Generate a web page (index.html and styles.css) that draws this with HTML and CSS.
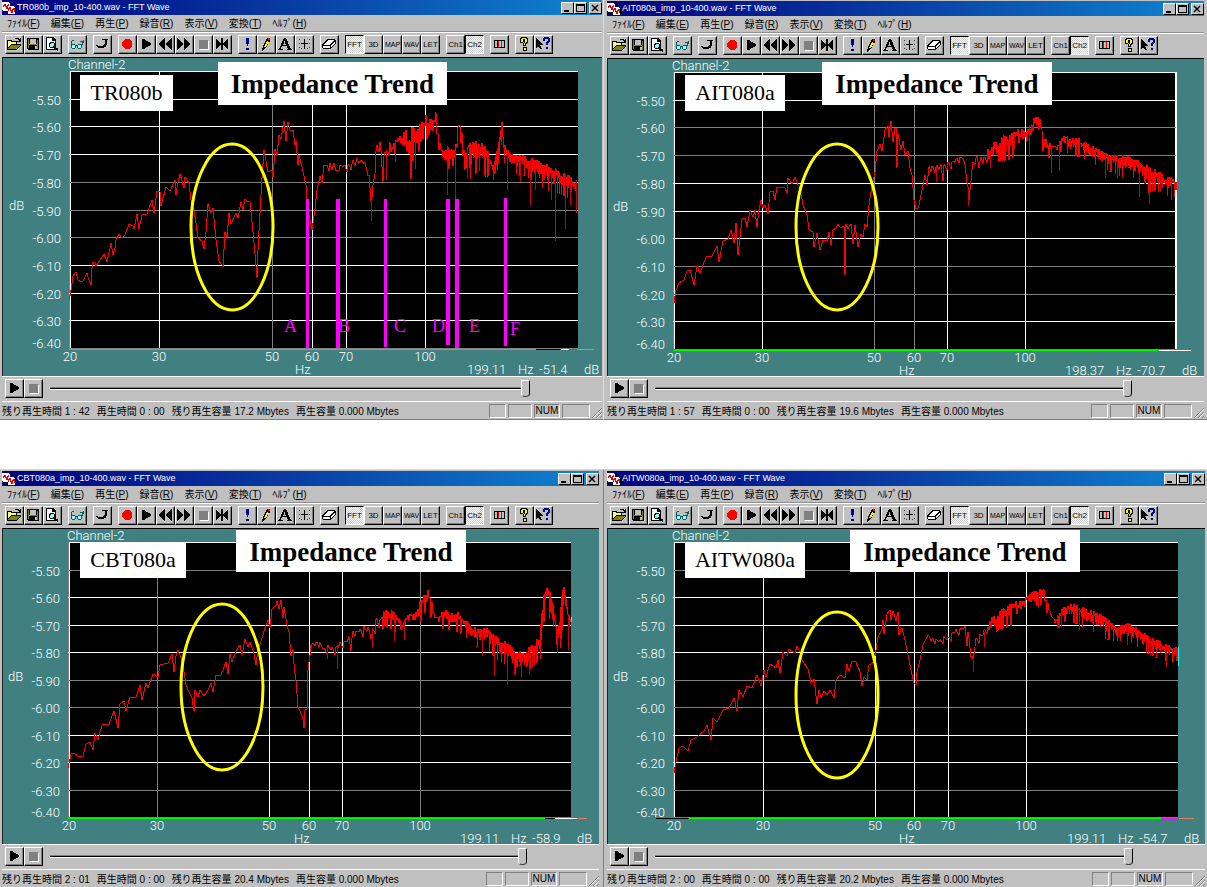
FILE: index.html
```html
<!DOCTYPE html>
<html lang="ja">
<head>
    <meta charset="UTF-8">
    <meta name="viewport" content="width=device-width, initial-scale=1.0">
    <title>FFT Wave</title>
    <link rel="stylesheet" href="styles.css">
</head>
<body>
    <!-- Toolbar icons, 16x16 -->
    <svg class="sprite" aria-hidden="true">
        <symbol id="i-app" viewBox="0 0 14 12">
            <path d="M0 0h7v1h1v3h4v1h1v7H5V9H1V8H0z" fill="#fff"/>
            <path d="M1 5V3h1V2h1v2h1v2h1V3h1V2h1" fill="none" stroke="#e00000"/>
            <path d="M6 9V6h1V5h1v3h1v2h1V7h1V6h1v4" fill="none" stroke="#e00000"/>
            <path d="M8 1h1v3M1 9h4v3M13 5v7" fill="none" stroke="#000"/>
        </symbol>
        <symbol id="i-open" viewBox="0 0 16 16">
            <path d="M1 4h5v1h5v3h4v1l-4 5H1z" fill="#000"/>
            <path d="M2 5h3v1h5v2H5l-3 4z" fill="#ffff80"/>
            <path d="M5 9h9l-3 4H2z" fill="#808000"/>
            <path d="M9 3V2h3v1h1v2h1M11 5h3V2" fill="none" stroke="#000"/>
        </symbol>
        <symbol id="i-save" viewBox="0 0 16 16">
            <path d="M2 2h12v12H3v-1H2z" fill="#000"/>
            <path d="M3 3h1v9H3zM12 4h1v9h-1zM3 8h10v1H3z" fill="#808000"/>
            <path d="M5 3h6v5H5zM10 10h2v3h-2z" fill="#c0c0c0"/>
        </symbol>
        <symbol id="i-preview" viewBox="0 0 16 16">
            <path d="M2 1h7l3 3v10H2z" fill="#000"/>
            <path d="M3 2h5v3h3v8H3z" fill="#fff"/>
            <circle cx="8" cy="9" r="2.500" fill="#80ffff" stroke="#000"/>
            <path d="M10 11l4 3" stroke="#000" stroke-width="2"/>
        </symbol>
        <symbol id="i-glasses" viewBox="0 0 16 16">
            <path d="M2 8h4v1h1v3H6v1H3v-1H2zM9 8h4v4h-1v1H9v-1H8V9h1z" fill="#006060"/>
            <path d="M3 9h3v3H3zM9 9h3v3H9z" fill="#a0ffff"/>
            <path d="M2 5h1V4h2v1H3v3H2zM14 4h1v3h-1v2h-1V6h-2V5h3zM7 9h1v1H7z" fill="#006060"/>
        </symbol>
        <symbol id="i-undo" viewBox="0 0 16 16">
            <path d="M8 3h6v1h-1v5h-1v2h-2v1H4v-1H3v-1H2V9h2v1h5V9h1V8h1V4H8z" fill="#000"/>
        </symbol>
        <symbol id="i-rec" viewBox="0 0 16 16">
            <path d="M6 3h4l3 3v4l-3 3H6l-3-3V6z" fill="#f00"/>
        </symbol>
        <symbol id="i-play" viewBox="0 0 16 16">
            <path d="M4 3h2l8 5-8 5H4z" fill="#000"/>
        </symbol>
        <symbol id="i-rew" viewBox="0 0 16 16">
            <path d="M8 2v12L1 8zM15 2v12L8 8z" fill="#000"/>
        </symbol>
        <symbol id="i-ff" viewBox="0 0 16 16">
            <path d="M1 2v12l7-6zM8 2v12l7-6z" fill="#000"/>
        </symbol>
        <symbol id="i-stop" viewBox="0 0 16 16">
            <path d="M5 5h9v9H5z" fill="#fff"/>
            <path d="M4 4h9v9H4z" fill="#808080"/>
        </symbol>
        <symbol id="i-skip" viewBox="0 0 16 16">
            <path d="M2 2l5 6-5 6zM7 2h2v12H7zM14 2v12L9 8z" fill="#000"/>
        </symbol>
        <symbol id="i-mark" viewBox="0 0 16 16">
            <path d="M7 2h3v4l-1 4H8L7 6zM7 12h3v2H7z" fill="#000090"/>
        </symbol>
        <symbol id="i-pencil" viewBox="0 0 16 16">
            <path d="M9 2h3v3L7 13l-3 2 1-5z" fill="#000"/>
            <path d="M9 5l2 1-4 6-1-1z" fill="#ffff00"/>
            <path d="M10 2h1l1 2h-2z" fill="#f00"/>
        </symbol>
        <symbol id="i-font" viewBox="0 0 16 16">
            <path d="M7 2h2l5 11h1v1h-5v-1h1l-1-3H5l-1 3h2v1H1v-1h1zM6 9h3L7.500 5z" fill="#000" fill-rule="evenodd"/>
        </symbol>
        <symbol id="i-grid" viewBox="0 0 16 16">
            <path d="M8 3h1v4h3v1H9v5H8V8H5V7h3z" fill="#000"/>
            <path d="M3 3h1v1H3zM3 7h1v1H3zM3 11h1v1H3zM13 3h1v1h-1zM13 7h1v1h-1zM13 11h1v1h-1zM5 12h1v1H5zM11 12h1v1h-1z" fill="#404040"/>
        </symbol>
        <symbol id="i-eraser" viewBox="0 0 16 16">
            <path d="M6 3h8v1h1v3l-5 6H2v-1H1V9z" fill="#000"/>
            <path d="M7 4h6L9 9H3zM2 10h7v2H2zM10 10l4-5v2l-4 5z" fill="#fff"/>
        </symbol>
        <symbol id="i-range" viewBox="0 0 16 16">
            <path d="M3 4h11v8H3zM4 5v6h2V5zM11 5v6h2V5zM7 5v6h3V5z" fill="#000" fill-rule="evenodd"/>
            <path d="M7 5h1v6H7zM10 5h1v6h-1z" fill="#f00"/>
        </symbol>
        <symbol id="i-help" viewBox="0 0 16 16">
            <path d="M5 1h6v1h1v5h-1v1h-1v2H7V7h1V6H7v1H4V2h1zM7 11h4v4H7z" fill="#000"/>
            <path d="M6 2h4v1h1v3h-1v1H9v2H8V7h1V3H7v3H5V3h1zM8 12h2v2H8z" fill="#ffff00"/>
        </symbol>
        <symbol id="i-what" viewBox="0 0 16 16">
            <path d="M1 2l7 7H5l2 4H5L3 10l-2 2z" fill="#000"/>
            <path d="M9 1h5v1h1v4h-1v1h-1v2h-2V6h1V5h1V3h-3v2H8V2h1zM11 11h2v2h-2z" fill="#000090"/>
        </symbol>
    </svg>

    <main class="desktop" id="desktop"></main>

    <template id="window-template">
        <section class="window">
            <header class="titlebar">
                <svg class="app-icon"><use href="#i-app"/></svg>
                <h1 class="title"></h1>
                <button class="caption-btn" aria-label="最小化"><svg viewBox="0 0 9 8"><path d="M1 6h5v2H1z"/></svg></button>
                <button class="caption-btn" aria-label="最大化"><svg viewBox="0 0 9 8"><path d="M0 0h9v8H0zM1 2v5h7V2z" fill-rule="evenodd"/></svg></button>
                <button class="caption-btn caption-close" aria-label="閉じる"><svg viewBox="0 0 9 8"><path d="M1 1l6 6M7 1L1 7" stroke="#000" stroke-width="1.500"/></svg></button>
            </header>
            <nav class="menubar">
                <button>ﾌｧｲﾙ(<u>F</u>)</button>
                <button>編集(<u>E</u>)</button>
                <button>再生(<u>P</u>)</button>
                <button>録音(<u>R</u>)</button>
                <button>表示(<u>V</u>)</button>
                <button>変換(<u>T</u>)</button>
                <button>ﾍﾙﾌﾟ(<u>H</u>)</button>
            </nav>
            <div class="toolbar">
                <div class="group">
                    <button class="tool" aria-label="開く"><svg><use href="#i-open"/></svg></button>
                    <button class="tool" aria-label="保存"><svg><use href="#i-save"/></svg></button>
                    <button class="tool" aria-label="プレビュー"><svg><use href="#i-preview"/></svg></button>
                </div>
                <div class="group">
                    <button class="tool" aria-label="表示"><svg><use href="#i-glasses"/></svg></button>
                </div>
                <div class="group">
                    <button class="tool" aria-label="元に戻す"><svg><use href="#i-undo"/></svg></button>
                </div>
                <div class="group">
                    <button class="tool" aria-label="録音"><svg><use href="#i-rec"/></svg></button>
                    <button class="tool" aria-label="再生"><svg><use href="#i-play"/></svg></button>
                    <button class="tool" aria-label="巻き戻し"><svg><use href="#i-rew"/></svg></button>
                    <button class="tool" aria-label="早送り"><svg><use href="#i-ff"/></svg></button>
                    <button class="tool" aria-label="停止"><svg><use href="#i-stop"/></svg></button>
                    <button class="tool" aria-label="スキップ"><svg><use href="#i-skip"/></svg></button>
                </div>
                <div class="group">
                    <button class="tool" aria-label="マーク"><svg><use href="#i-mark"/></svg></button>
                    <button class="tool" aria-label="ペン"><svg><use href="#i-pencil"/></svg></button>
                    <button class="tool" aria-label="フォント"><svg><use href="#i-font"/></svg></button>
                    <button class="tool" aria-label="グリッド"><svg><use href="#i-grid"/></svg></button>
                </div>
                <div class="group">
                    <button class="tool" aria-label="消去"><svg><use href="#i-eraser"/></svg></button>
                </div>
                <div class="group">
                    <button class="tool pressed">FFT</button>
                    <button class="tool">3D</button>
                    <button class="tool tiny">MAP</button>
                    <button class="tool tiny">WAV</button>
                    <button class="tool">LET</button>
                </div>
                <div class="group">
                    <button class="tool">Ch1</button>
                    <button class="tool pressed">Ch2</button>
                </div>
                <div class="group">
                    <button class="tool" aria-label="範囲"><svg><use href="#i-range"/></svg></button>
                </div>
                <div class="group">
                    <button class="tool" aria-label="ヘルプ"><svg><use href="#i-help"/></svg></button>
                    <button class="tool" aria-label="状況ヘルプ"><svg><use href="#i-what"/></svg></button>
                </div>
            </div>
            <svg class="chart" role="img"></svg>
            <div class="transport">
                <button class="tool" aria-label="再生"><svg><use href="#i-play"/></svg></button>
                <button class="tool" aria-label="停止"><svg><use href="#i-stop"/></svg></button>
                <input class="seek" type="range" min="0" max="100" value="100" aria-label="再生位置">
            </div>
            <footer class="statusbar">
                <span class="left-time"></span>
                <span>再生時間 0 : 00</span>
                <span class="left-size"></span>
                <span>再生容量 0.000 Mbytes</span>
                <div class="panes">
                    <span class="pane pane-s"></span>
                    <span class="pane pane-m"></span>
                    <span class="pane pane-num">NUM</span>
                    <span class="pane pane-l"></span>
                    <svg class="grip" viewBox="0 0 10 10"><path d="M0 10L10 0M4 10l6-6M8 10l2-2" stroke="#808080"/><path d="M1 10l9-9M5 10l5-5" stroke="#fff"/></svg>
                </div>
            </footer>
        </section>
    </template>

    <script src="script.js"></script>
</body>
</html>
```
FILE: styles.css
```css
* {
    box-sizing: border-box;
}

body {
    margin: 0;
    background-color: #fff;
    color: #000;
    font-family: "Liberation Sans", "Noto Sans CJK JP", sans-serif;
    font-size: 10px;
}

button {
    padding: 0;
    border: none;
    background: none;
    color: inherit;
    font: inherit;
}

.sprite {
    display: none;
}

.desktop {
    display: grid;
    grid-template-columns: 604fr 603fr;
    row-gap: 49px;
    align-items: end;
}

.window {
    display: flex;
    flex-direction: column;
    min-width: 0;
    padding: 1px 3px 0;
    background-color: #c0c0c0;
    border-bottom: 1px solid #808080;
}

.window-tr080b {
    padding: 0 1px 0 2px;
    border-right: 1px solid #e0e0e0;
}

.window-cbt080a,
.window-aitw080a {
    padding-top: 1px;
    border-top: 1px solid #d8d8d8;
    border-bottom: none;
}

.window-cbt080a {
    padding-right: 4px;
    padding-left: 2px;
    border-right: 1px solid #808080;
}

.window-aitw080a {
    padding-right: 2px;
}

/* Title bar */
.titlebar {
    display: flex;
    align-items: center;
    height: 15px;
    background: linear-gradient(to right, #000080, #0838a0 45%, #1084d0);
    color: #fff;
}

.app-icon {
    width: 14px;
    height: 12px;
    margin-right: 1px;
    shape-rendering: crispEdges;
}

.title {
    flex: 1;
    margin: 0;
    font-size: 9px;
    font-weight: normal;
    line-height: 15px;
    white-space: nowrap;
}

.caption-btn {
    display: flex;
    align-items: center;
    justify-content: center;
    width: 13px;
    height: 12px;
    background-color: #c0c0c0;
    border: 1px solid;
    border-color: #fff #000 #000 #fff;
}

.caption-btn svg {
    width: 9px;
    height: 8px;
}

.caption-close {
    margin-left: 2px;
}

/* Menu */
.menubar {
    display: flex;
    gap: 11px;
    height: 17px;
    padding-left: 5px;
    line-height: 14px;
}

/* Toolbar */
.toolbar {
    display: flex;
    gap: 6px;
    height: 25px;
    padding: 2px 0 0 3px;
    border-top: 1px solid #fff;
    box-shadow: 0 -1px 0 #909090;
}

.group {
    display: flex;
}

.tool {
    flex: none;
    display: flex;
    align-items: center;
    justify-content: center;
    width: 19px;
    height: 19px;
    overflow: hidden;
    border: 1px solid;
    border-color: #fff #000 #000 #fff;
    box-shadow: inset -1px -1px 0 #808080;
    font-size: 8px;
}

.tool svg {
    width: 16px;
    height: 16px;
    margin: 0 1px 1px 0;
    shape-rendering: crispEdges;
}

.tool.tiny {
    font-size: 7px;
}

.tool.pressed {
    background: repeating-conic-gradient(#fff 0 25%, #d0d0d0 0 50%) 0 0 / 2px 2px;
    border-color: #000 #fff #fff #000;
    box-shadow: none;
}

/* Spectrum */
.chart {
    display: block;
    width: 100%;
    height: auto;
    background-color: #408080;
    font-family: Roboto, sans-serif;
    font-size: 13px;
    font-weight: 300;
}

.chart text {
    fill: #fff;
}

.chart .crisp {
    shape-rendering: crispEdges;
}

.chart .name,
.chart .heading,
.chart .mark {
    font-family: "Liberation Serif", serif;
    font-weight: normal;
}

.chart .name {
    fill: #000;
    font-size: 22px;
}

.chart .heading {
    fill: #000;
    font-size: 27px;
    font-weight: bold;
}

.chart .mark {
    fill: #ff00ff;
    font-size: 18px;
}

.trace {
    fill: none;
    stroke: #ff0000;
}

.oval {
    fill: none;
    stroke: #ffff00;
    stroke-width: 3;
}

/* Transport */
.transport {
    display: flex;
    height: 25px;
    padding: 2px 72px 0 3px;
    border-top: 1px solid #fff;
}

.seek {
    flex: 1;
    min-width: 0;
    height: 19px;
    margin: 0 0 0 7px;
    background: none;
    appearance: none;
}

.seek::-webkit-slider-runnable-track {
    height: 3px;
    background-color: #000;
    border-top: 1px solid #808080;
    border-bottom: 1px solid #fff;
}

.seek::-webkit-slider-thumb {
    width: 9px;
    height: 17px;
    margin-top: -8px;
    background-color: #c0c0c0;
    border: 1px solid;
    border-color: #fff #000 #404040 #fff;
    border-radius: 0 0 4px 4px;
    appearance: none;
}

/* Status bar */
.statusbar {
    display: flex;
    align-items: center;
    gap: 7px;
    height: 18px;
    border-top: 1px solid #fff;
    white-space: nowrap;
}

.panes {
    display: flex;
    align-items: end;
    gap: 2px;
    margin-left: auto;
}

.pane {
    height: 14px;
    border: 1px solid;
    border-color: #808080 #fff #fff #808080;
    line-height: 12px;
    text-align: center;
}

.pane-s {
    width: 17px;
}

.pane-m {
    width: 24px;
}

.pane-num {
    width: 26px;
}

.pane-l {
    width: 28px;
}

.grip {
    width: 10px;
    height: 10px;
}
```
FILE: script.js
```js
// view: chart area on the desktop (x, y, width, height)
// plot: left, top, right, bottom of the black area
// rows / cols: grid line shades, w = white, g = gray
// line: single points, band: [x, top, bottom] of the dense part, spikes: [x, top, bottom]
const windows = [
    {
        name: 'TR080b', file: 'TR080b_imp_10-400.wav', time: '1 : 42', size: '17.2', level: '-51.4', freq: '199.11',
        view: [2, 57, 600, 319], plot: [70, 71, 578, 348], rows: 'wwwgggwww', cols: 'wgwww',
        nameBox: [80, 75, 93, 36], headBox: [218, 62, 229, 43], oval: [232, 227],
        base: [[69, 536, '#00ff00'], [536, 561, '#000'], [561, 569, '#fff'], [569, 577, '#ff00ff'], [577, 594, '#e08070']],
        line: '69,301 70,296 71,290 73,276 76,272 78,280 80,281 83,281 85,277 87,273 89,280 91,285 92,268 93,262 95,263 96,266 98,263 104,254 107,262 111,243 113,255 115,248 116,240 119,234 122,238 125,235 129,224 133,226 134,229 137,214 139,229 142,215 147,214 152,200 154,213 157,191 160,192 161,206 166,187 170,191 175,180 176,195 178,182 180,174 184,188 185,177 189,183 191,200 194,211 196,223 198,238 202,241 204,249 206,232 208,204 211,213 213,208 216,240 219,261 222,265 223,267 225,232 227,237 229,213 231,224 236,213 238,218 241,202 243,210 245,199 247,201 250,202 253,232 255,254 257,278 258,250 260,213 262,178 264,150 266,161 268,172 272,170 273,177 275,149 277,155 279,135 281,139 284,121 286,141 288,122 290,130 293,130 295,145 296,141 298,165 299,155 301,163 304,176 306,185 307,200 309,215 312,230 315,209 317,190 320,176 322,183 324,165 327,165 329,171 330,163 332,170 334,163 336,171',
        band: [[338, 165, 172], [345, 161, 172], [355, 158, 170], [362, 157, 165], [366, 163, 172], [370, 178, 190], [372, 190, 210], [374, 175, 190], [376, 150, 160], [378, 135, 150], [380, 142, 152], [383, 150, 170], [390, 140, 160], [400, 133, 145], [412, 125, 160], [420, 122, 148], [428, 112, 140], [436, 112, 125], [438, 130, 140], [443, 150, 160], [450, 145, 160], [453, 150, 160], [456, 130, 160], [459, 118, 130], [462, 130, 150], [465, 150, 170], [470, 142, 165], [480, 140, 158], [485, 145, 165], [490, 155, 168], [494, 165, 175], [497, 148, 170], [500, 125, 150], [502, 120, 140], [504, 142, 155], [510, 152, 165], [525, 155, 168], [545, 163, 180], [560, 170, 185], [570, 175, 190], [577, 180, 196]],
        spikes: [[371, 190, 221], [386, 150, 180], [395, 140, 162], [415, 130, 169], [447, 150, 195], [455, 150, 200], [467, 150, 178], [479, 145, 171], [507, 155, 190], [520, 160, 182], [530, 160, 205], [535, 162, 190], [551, 168, 200], [555, 170, 241], [565, 175, 229], [570, 178, 205], [576, 180, 213]],
        bars: [[307, 199, 348, 3], [337, 199, 348, 4], [385, 199, 347, 3], [447, 199, 345, 4], [456, 199, 348, 4], [505, 198, 346, 3]],
        marks: [['A', 284, 332], ['B', 338, 332], ['C', 394, 332], ['D', 432, 332], ['E', 469, 332], ['F', 510, 335]]
    },
    {
        name: 'AIT080a', file: 'AIT080a_imp_10-400.wav', time: '1 : 57', size: '19.6', level: '-70.7', freq: '198.37',
        view: [607, 58, 597, 318], plot: [674, 72, 1176, 349], rows: 'wggwwwggw', cols: 'wggww', edge: '#fff',
        nameBox: [685, 75, 100, 36], headBox: [822, 62, 230, 43], oval: [837, 227],
        base: [[674, 1159, '#00ff00'], [1159, 1191, '#fff']],
        line: '674,303 676,290 679,283 684,280 687,271 690,270 694,285 697,266 700,273 706,257 712,256 717,246 719,262 723,241 728,239 731,230 734,243 736,223 738,255 742,219 745,218 747,227 750,210 753,217 755,210 757,227 759,210 761,200 763,208 765,205 768,214 770,192 773,191 775,200 777,187 785,188 787,193 788,178 792,184 795,177 797,183 800,188 803,205 807,215 809,229 811,231 813,232 814,247 817,233 820,250 823,240 827,241 829,232 831,245 833,230 836,228 838,224 841,228 844,226 845,275 846,224 848,229 851,224 853,244 855,225 858,247 861,234 863,237 865,224 867,227 869,205 871,192 873,182 875,172 877,151 880,144 882,151 885,130 888,126 889,137 891,121 893,142 895,128 896,128 897,168 898,134 901,150 903,141 905,155 908,151 910,168 912,175 914,200 916,209 918,208 919,205 922,190 925,175 927,185 929,167',
        band: [[929, 166, 172], [935, 163, 172], [945, 163, 175], [955, 158, 165], [963, 156, 163], [965, 165, 172], [968, 185, 195], [969, 198, 205], [972, 165, 175], [974, 156, 165], [983, 155, 168], [990, 145, 158], [1000, 137, 152], [1010, 133, 150], [1020, 126, 142], [1030, 122, 140], [1035, 115, 125], [1040, 118, 125], [1043, 135, 145], [1050, 143, 153], [1058, 143, 150], [1063, 136, 145], [1070, 137, 148], [1080, 138, 150], [1095, 146, 158], [1110, 154, 165], [1120, 154, 168], [1135, 158, 170], [1145, 163, 182], [1155, 168, 182], [1165, 175, 188], [1177, 178, 190]],
        spikes: [[936, 165, 182], [968, 190, 206], [990, 150, 168], [1006, 138, 152], [1014, 135, 149], [1029, 125, 157], [1051, 145, 173], [1059, 145, 171], [1105, 154, 178], [1117, 155, 179], [1139, 162, 197], [1149, 168, 204], [1160, 174, 192], [1171, 180, 200]]
    },
    {
        name: 'CBT080a', file: 'CBT080a_imp_10-400.wav', time: '2 : 01', size: '20.4', level: '-58.9', freq: '199.11',
        view: [2, 528, 597, 316], plot: [69, 542, 571, 817], rows: 'gwwwggwwg', cols: 'gwwwg',
        nameBox: [80, 542, 106, 36], headBox: [236, 530, 230, 42], oval: [222, 687],
        base: [[68, 545, '#00ff00'], [545, 555, '#000'], [555, 577, '#fff'], [577, 587, '#e08070']],
        line: '68,768 71,754 74,753 78,756 83,756 86,744 90,742 93,750 95,733 98,740 102,725 109,724 114,711 118,728 120,704 124,701 126,711 130,697 136,697 140,685 142,700 146,683 148,688 153,674 158,677 160,665 168,663 172,654 174,672 176,656 178,650 181,658 183,665 186,685 189,692 192,698 194,711 195,690 198,697 200,690 204,696 208,690 211,683 213,692 216,675 221,675 226,662 228,674 230,654 232,662 236,651 240,645 242,655 245,639 248,647 250,642 254,654 256,665 258,650 262,638 265,628 268,620 270,628 272,609 276,605 277,601 279,609 281,600 283,618 284,607 287,625 289,632 291,656 293,650 294,664 296,681 298,707 300,711 303,719 304,728 305,710 307,709 308,670 310,655 311,645',
        band: [[311, 645, 650], [315, 638, 650], [320, 640, 648], [325, 645, 655], [330, 645, 652], [336, 645, 655], [340, 640, 650], [343, 638, 648], [350, 635, 645], [358, 625, 640], [365, 624, 635], [372, 628, 640], [378, 615, 630], [385, 610, 620], [392, 609, 622], [400, 618, 630], [403, 622, 630], [408, 610, 620], [413, 610, 622], [417, 612, 618], [420, 600, 615], [425, 592, 605], [429, 588, 600], [432, 602, 615], [435, 615, 622], [445, 610, 622], [460, 612, 625], [470, 623, 635], [478, 628, 640], [487, 626, 640], [495, 635, 650], [505, 640, 655], [515, 650, 665], [525, 651, 668], [530, 645, 660], [535, 640, 655], [540, 635, 650], [543, 600, 625], [546, 580, 605], [548, 580, 600], [552, 600, 625], [557, 625, 638], [560, 622, 638], [562, 590, 615], [564, 585, 600], [568, 610, 625], [571, 617, 628]],
        spikes: [[327, 648, 659], [337, 645, 669], [372, 630, 648], [394, 612, 641], [404, 620, 640], [482, 630, 656], [494, 635, 676], [507, 645, 685], [514, 652, 675], [521, 655, 676], [529, 650, 675], [557, 630, 653], [568, 615, 650]],
        cursor: [571, 617, 622]
    },
    {
        name: 'AITW080a', file: 'AITW080a_imp_10-400.wav', time: '2 : 00', size: '20.2', level: '-54.7', freq: '199.11',
        view: [607, 528, 598, 316], plot: [674, 542, 1178, 817], rows: 'gwwwggwwg', cols: 'wwwww',
        nameBox: [685, 542, 120, 36], headBox: [850, 530, 230, 42], oval: [837, 695],
        base: [[656, 689, '#000'], [689, 1161, '#00ff00'], [1161, 1178, '#ff00ff'], [1179, 1194, '#e08070']],
        line: '674,773 676,762 679,748 683,746 688,751 691,740 697,737 704,731 707,725 711,740 713,718 717,722 723,710 729,708 734,698 737,711 739,690 743,697 747,686 752,688 757,675 761,686 764,670 766,677 770,664 776,668 778,660 780,673 783,652 787,656 789,649 795,653 797,646 800,652 801,658 804,663 808,669 811,683 814,679 817,704 819,690 821,698 824,691 827,695 830,690 834,698 836,680 840,675 845,678 847,664 849,671 852,661 856,662 860,672 862,686 864,677 867,680 869,665 874,662 876,650 878,637 882,629 883,620 884,634 887,614 890,610 891,620 893,611 896,621 898,612 899,635 902,628 905,640 908,655 911,670 914,683 916,685 917,672 920,660 923,645 927,637',
        band: [[927, 634, 640], [933, 636, 645], [940, 636, 645], [948, 635, 642], [955, 628, 638], [963, 624, 632], [968, 626, 640], [970, 650, 660], [973, 655, 665], [976, 635, 645], [983, 630, 640], [990, 618, 630], [1000, 610, 622], [1010, 603, 618], [1020, 597, 612], [1030, 590, 602], [1038, 590, 600], [1043, 585, 597], [1047, 600, 608], [1052, 615, 620], [1057, 617, 625], [1065, 604, 615], [1075, 604, 616], [1090, 608, 622], [1105, 615, 630], [1115, 625, 635], [1130, 623, 635], [1145, 633, 645], [1155, 638, 650], [1170, 645, 656], [1178, 648, 656]],
        spikes: [[973, 660, 672], [984, 632, 647], [1038, 592, 608], [1057, 615, 628], [1061, 612, 628], [1079, 608, 630], [1118, 628, 638], [1127, 625, 645], [1150, 638, 655], [1166, 645, 667], [1173, 648, 663]],
        cursor: [1178, 647, 666]
    }
];

const shades = { w: '#fff', g: '#808080' };
const hline = (x1, x2, y, color) => `<rect class="crisp" x="${x1}" y="${y}" width="${x2 - x1}" height="1" fill="${color}"/>`;
const vline = (x, y1, y2, color, w = 1) => `<rect class="crisp" x="${x}" y="${y1}" width="${w}" height="${y2 - y1}" fill="${color}"/>`;

// Fill the noisy part of the spectrum between its upper and lower envelope,
// FFT bins get closer to each other towards the right end
function bandPoints(band, right) {
    let seed = 7;
    const random = () => (seed = (seed * 16807) % 2147483647) / 2147483647;
    const points = [];
    for (let i = 0; i < band.length - 1; i++) {
        const [x1, t1, b1] = band[i];
        const [x2, t2, b2] = band[i + 1];
        for (let x = x1; x < x2; x++) {
            const k = (x - x1) / (x2 - x1);
            const top = t1 + (t2 - t1) * k;
            const height = b1 + (b2 - b1) * k - top;
            const high = top + random() * height * 0.5;
            const low = top + height * (random() < 0.15 ? 1.6 : 0.4 + random() * 0.7);
            const dense = x > right - 110;
            const step = x > right - 190 ? 2 : 4;
            if (dense || x % step < step / 2) points.push(`${x},${high.toFixed(1)}`);
            if (dense || x % step === step - 1) points.push(`${x},${low.toFixed(1)}`);
        }
    }
    return points.join(' ');
}

function drawChart(w) {
    const [left, top, right, bottom] = w.plot;
    const [vx, vy, vw, vh] = w.view;
    const xOf = f => Math.round(left + Math.log10(f / 20) * (right - left));
    const yOf = i => Math.round(top + i * (bottom - top) / 10);
    let s = '';

    s += hline(vx, vx + vw, vy, '#000') + vline(vx, vy, vy + vh, '#202020');
    s += `<rect x="${left - 1}" y="${top}" width="${right - left + 1}" height="${bottom - top + 1}"/>`;
    s += hline(left - 1, right, top, '#fff') + hline(left - 1, right, bottom, '#808080');
    s += vline(left - 1, top, bottom, '#808080') + vline(left, top, bottom, '#fff');
    if (w.edge) s += vline(right - 1, top, bottom, w.edge, 2);

    [...w.rows].forEach((c, i) => s += hline(left - 1, right, yOf(i + 1), shades[c]));
    [30, 50, 60, 70, 100].forEach((f, i) => s += vline(xOf(f), top, bottom, shades[w.cols[i]]));
    w.base.forEach(([x1, x2, color]) => s += hline(x1, x2, bottom + 1, color));

    for (let i = 1; i <= 10; i++) {
        const y = i === 10 ? bottom : yOf(i) + 6;
        s += `<text x="${left - 9}" y="${y}" text-anchor="end">${(-5.4 - i / 10).toFixed(2)}</text>`;
    }
    [20, 30, 50, 60, 70, 100].forEach(f => s += `<text x="${xOf(f)}" y="${bottom + 13}" text-anchor="middle">${f}</text>`);
    s += `<text x="${left - 2}" y="${top - 2}">Channel-2</text>`;
    s += `<text x="${left - 61}" y="${top + 139}">dB</text>`;
    s += `<text x="${left + 225}" y="${bottom + 26}">Hz</text>`;
    s += `<text x="${right - 111}" y="${bottom + 26}">${w.freq}</text>`;
    s += `<text x="${right - 60}" y="${bottom + 26}">Hz</text>`;
    s += `<text x="${right - 39}" y="${bottom + 26}">${w.level}</text>`;
    s += `<text x="${right + 6}" y="${bottom + 26}">dB</text>`;

    s += `<polyline class="trace crisp" points="${w.line} ${bandPoints(w.band, right)}"/>`;
    w.spikes.forEach(([x, y1, y2]) => s += vline(x, y1, y2, '#d00000'));
    if (w.cursor) s += vline(...w.cursor, '#00ffff');

    (w.bars || []).forEach(([x, y1, y2, width]) => s += vline(x - 1, y1, y2, '#ff00ff', width));
    (w.marks || []).forEach(([letter, x, y]) => s += `<text class="mark" x="${x}" y="${y}">${letter}</text>`);
    s += `<ellipse class="oval" cx="${w.oval[0]}" cy="${w.oval[1]}" rx="41" ry="83"/>`;

    const [nx, ny, nw, nh] = w.nameBox;
    const [hx, hy, hw, hh] = w.headBox;
    s += `<rect x="${nx}" y="${ny}" width="${nw}" height="${nh}" fill="#fff"/>`;
    s += `<text class="name" x="${nx + nw / 2}" y="${ny + 25}" text-anchor="middle">${w.name}</text>`;
    s += `<rect x="${hx}" y="${hy}" width="${hw}" height="${hh}" fill="#fff"/>`;
    s += `<text class="heading" x="${hx + hw / 2}" y="${hy + 31}" text-anchor="middle">Impedance Trend</text>`;
    return s;
}

const desktop = document.getElementById('desktop');
const template = document.getElementById('window-template');

windows.forEach(w => {
    const node = template.content.cloneNode(true);
    node.querySelector('.window').classList.add('window-' + w.name.toLowerCase());
    node.querySelector('.title').textContent = `${w.file} - FFT Wave`;
    node.querySelector('.left-time').textContent = `残り再生時間 ${w.time}`;
    node.querySelector('.left-size').textContent = `残り再生容量 ${w.size} Mbytes`;

    const chart = node.querySelector('.chart');
    chart.setAttribute('viewBox', w.view.join(' '));
    chart.setAttribute('aria-label', w.name);
    chart.innerHTML = drawChart(w);
    desktop.appendChild(node);
});
```
